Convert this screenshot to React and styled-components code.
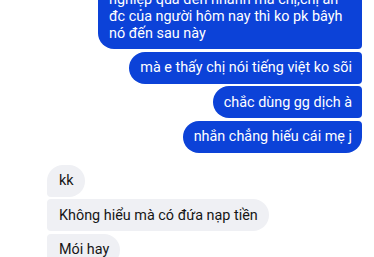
import React from "react";
import styled, { createGlobalStyle, css } from "styled-components";

const Global = createGlobalStyle`
  html, body { margin: 0; padding: 0; background: #ffffff; }
  body { width: 374px; height: 257px; overflow: hidden; font-family: Roboto, "Noto Sans", "Liberation Sans", sans-serif; }
`;

const Thread = styled.div`
  display: flex;
  flex-direction: column;
  margin-top: -17px;
  padding: 0 12px 0 47px;
`;

const Group = styled.div`
  display: flex;
  flex-direction: column;
  align-items: ${(p) => (p.$out ? "flex-end" : "flex-start")};
  gap: 2.5px;
  & + & { margin-top: 12px; }
`;

const R = 16;
const r = 4;

const Bubble = styled.div`
  box-sizing: border-box;
  padding: 7.5px 11px 7.5px 12px;
  font-size: 14.4px;
  line-height: 17px;
  white-space: nowrap;
  ${(p) =>
    p.$wide &&
    css`
      width: 264px;
      white-space: normal;
    `}
  ${(p) =>
    p.$out
      ? css`
          background: #0c42d8;
          color: #ffffff;
          padding: 7.5px 10px 7.5px 11px;
          border-radius: ${R}px ${p.$pos === "first" ? R : r}px
            ${p.$pos === "last" ? R : r}px ${R}px;
        `
      : css`
          background: #eff0f4;
          color: #161616;
          border-radius: ${p.$pos === "first" ? R : r}px ${R}px ${R}px
            ${p.$pos === "last" ? R : r}px;
        `}
`;

export default function App() {
  return (
    <>
      <Global />
      <Thread>
        <Group $out>
          <Bubble $out $wide $pos="first">
            nghiệp quả đến nhanh mà chị,chị ăn
            <br />
            đc của người hôm nay thì ko pk bâyh
            <br />
            nó đến sau này
          </Bubble>
          <Bubble $out $pos="mid">mà e thấy chị nói tiếng việt ko sõi</Bubble>
          <Bubble $out $pos="mid">chắc dùng gg dịch à</Bubble>
          <Bubble $out $pos="last">nhắn chẳng hiếu cái mẹ j</Bubble>
        </Group>
        <Group>
          <Bubble $pos="first">kk</Bubble>
          <Bubble $pos="mid">Không hiểu mà có đứa nạp tiền</Bubble>
          <Bubble $pos="mid">Mói hay</Bubble>
        </Group>
      </Thread>
    </>
  );
}
